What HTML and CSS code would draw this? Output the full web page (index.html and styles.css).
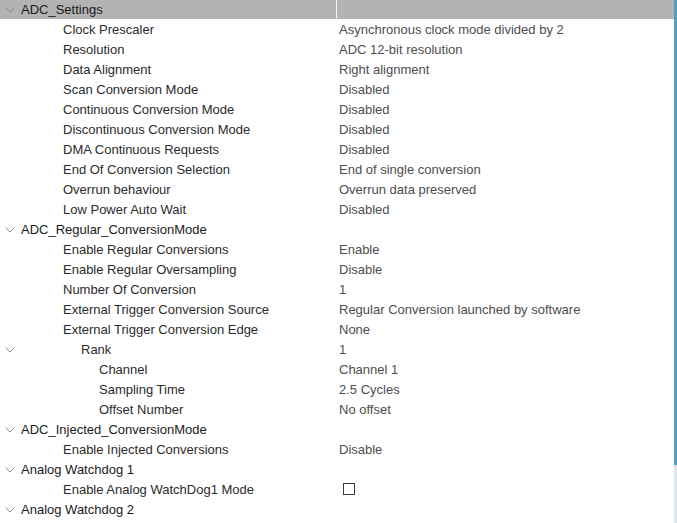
FILE: index.html
```html
<!DOCTYPE html>
<html>
<head>
<meta charset="utf-8">
<link rel="stylesheet" href="styles.css">
</head>
<body>
<div class="frame">
  <div class="tree">
    <div class="row head"><div class="name l0"><svg class="chev" viewBox="0 0 10 6"><polyline points="0.5,0.5 5,5 9.5,0.5"/></svg>ADC_Settings</div><div class="sep"></div><div class="val"></div></div>
    <div class="row"><div class="name l1">Clock Prescaler</div><div class="sep"></div><div class="val">Asynchronous clock mode divided by 2</div></div>
    <div class="row"><div class="name l1">Resolution</div><div class="sep"></div><div class="val">ADC 12-bit resolution</div></div>
    <div class="row"><div class="name l1">Data Alignment</div><div class="sep"></div><div class="val">Right alignment</div></div>
    <div class="row"><div class="name l1">Scan Conversion Mode</div><div class="sep"></div><div class="val">Disabled</div></div>
    <div class="row"><div class="name l1">Continuous Conversion Mode</div><div class="sep"></div><div class="val">Disabled</div></div>
    <div class="row"><div class="name l1">Discontinuous Conversion Mode</div><div class="sep"></div><div class="val">Disabled</div></div>
    <div class="row"><div class="name l1">DMA Continuous Requests</div><div class="sep"></div><div class="val">Disabled</div></div>
    <div class="row"><div class="name l1">End Of Conversion Selection</div><div class="sep"></div><div class="val">End of single conversion</div></div>
    <div class="row"><div class="name l1">Overrun behaviour</div><div class="sep"></div><div class="val">Overrun data preserved</div></div>
    <div class="row"><div class="name l1">Low Power Auto Wait</div><div class="sep"></div><div class="val">Disabled</div></div>
    <div class="row"><div class="name l0"><svg class="chev" viewBox="0 0 10 6"><polyline points="0.5,0.5 5,5 9.5,0.5"/></svg>ADC_Regular_ConversionMode</div><div class="sep"></div><div class="val"></div></div>
    <div class="row"><div class="name l1">Enable Regular Conversions</div><div class="sep"></div><div class="val">Enable</div></div>
    <div class="row"><div class="name l1">Enable Regular Oversampling</div><div class="sep"></div><div class="val">Disable</div></div>
    <div class="row"><div class="name l1">Number Of Conversion</div><div class="sep"></div><div class="val">1</div></div>
    <div class="row"><div class="name l1">External Trigger Conversion Source</div><div class="sep"></div><div class="val">Regular Conversion launched by software</div></div>
    <div class="row"><div class="name l1">External Trigger Conversion Edge</div><div class="sep"></div><div class="val">None</div></div>
    <div class="row"><div class="name l2"><svg class="chev" viewBox="0 0 10 6"><polyline points="0.5,0.5 5,5 9.5,0.5"/></svg>Rank</div><div class="sep"></div><div class="val">1</div></div>
    <div class="row"><div class="name l3">Channel</div><div class="sep"></div><div class="val">Channel 1</div></div>
    <div class="row"><div class="name l3">Sampling Time</div><div class="sep"></div><div class="val">2.5 Cycles</div></div>
    <div class="row"><div class="name l3">Offset Number</div><div class="sep"></div><div class="val">No offset</div></div>
    <div class="row"><div class="name l0"><svg class="chev" viewBox="0 0 10 6"><polyline points="0.5,0.5 5,5 9.5,0.5"/></svg>ADC_Injected_ConversionMode</div><div class="sep"></div><div class="val"></div></div>
    <div class="row"><div class="name l1">Enable Injected Conversions</div><div class="sep"></div><div class="val">Disable</div></div>
    <div class="row"><div class="name l0"><svg class="chev" viewBox="0 0 10 6"><polyline points="0.5,0.5 5,5 9.5,0.5"/></svg>Analog Watchdog 1</div><div class="sep"></div><div class="val"></div></div>
    <div class="row"><div class="name l1">Enable Analog WatchDog1 Mode</div><div class="sep"></div><div class="val"><span class="check"></span></div></div>
    <div class="row"><div class="name l0"><svg class="chev" viewBox="0 0 10 6"><polyline points="0.5,0.5 5,5 9.5,0.5"/></svg>Analog Watchdog 2</div><div class="sep"></div><div class="val"></div></div>
  </div>
  <div class="scroll"><div class="thumb"></div><div class="track"></div></div>
</div>
</body>
</html>
```
FILE: styles.css
```css
html, body {
  margin: 0;
  padding: 0;
  background: #ffffff;
}
body {
  font-family: "Liberation Sans", Arial, sans-serif;
  font-size: 13px;
  color: #2b2b2b;
}
.frame {
  display: flex;
  width: 677px;
  height: 523px;
  overflow: hidden;
}
.tree {
  width: 674px;
  display: flex;
  flex-direction: column;
}
.row {
  display: flex;
  height: 20px;
  line-height: 20px;
  white-space: nowrap;
}
.row.head {
  background: #b3b3b3;
  height: 19px;
  line-height: 19px;
  margin-bottom: 1px;
  color: #1a1a1a;
}
.name {
  width: 336px;
  position: relative;
  box-sizing: border-box;
}
.sep {
  width: 1px;
}
.row.head .sep {
  background: #f4f4f4;
}
.val {
  flex: 1;
  padding-left: 2px;
  color: #4d4d4d;
}
.l0 { padding-left: 21px; color: #1a1a1a; }
.l1 { padding-left: 63px; }
.l2 { padding-left: 81px; }
.l3 { padding-left: 99px; }
.chev {
  position: absolute;
  left: 5px;
  top: 7px;
  width: 10px;
  height: 6px;
  fill: none;
  stroke: #8a8a8a;
  stroke-width: 1;
}
.check {
  display: inline-block;
  width: 10px;
  height: 10px;
  border: 1px solid #3a3a3a;
  margin-left: 4px;
  margin-top: 3px;
  vertical-align: top;
  background: #fff;
}
.scroll {
  width: 3px;
  display: flex;
  flex-direction: column;
}
.thumb {
  height: 465px;
  background: #4aa3c6;
}
.track {
  flex: 1;
  background: #dde6ee;
}
```
